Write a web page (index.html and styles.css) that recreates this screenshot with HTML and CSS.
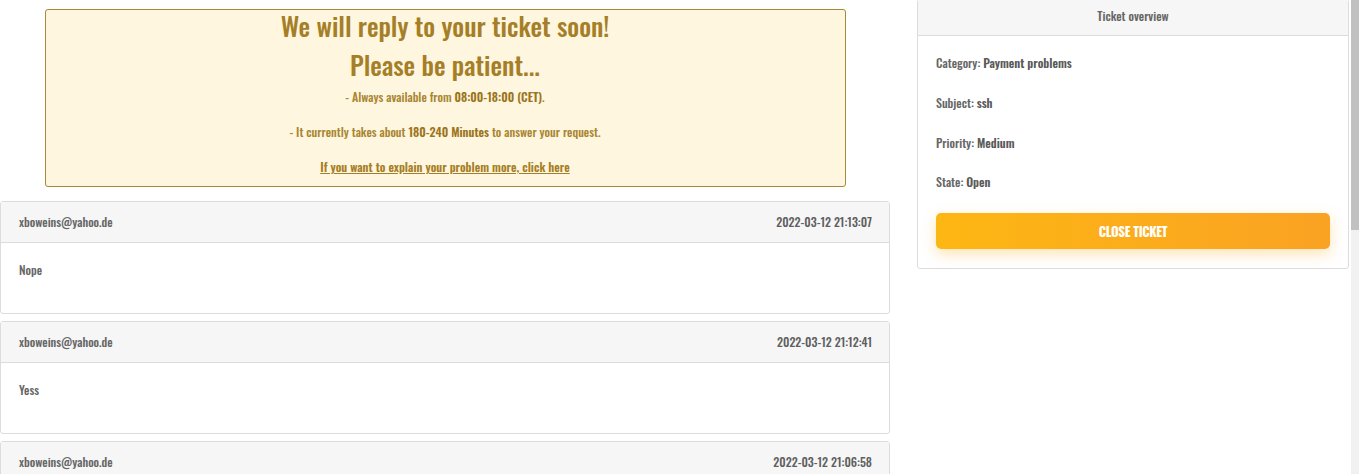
FILE: index.html
```html
<!DOCTYPE html>
<html lang="en">
<head>
<meta charset="utf-8">
<title>Ticket</title>
<link rel="stylesheet" href="styles.css">
</head>
<body>
<div class="page">
  <main class="main">
    <section class="notice">
      <h2 class="notice-title">We will reply to your ticket soon!</h2>
      <h2 class="notice-title second">Please be patient...</h2>
      <p class="notice-line">- Always available from <b>08:00-18:00 (CET)</b>.</p>
      <p class="notice-line">- It currently takes about <b>180-240 Minutes</b> to answer your request.</p>
      <p class="notice-line"><a class="notice-link" href="#">If you want to explain your problem more, click here</a></p>
    </section>

    <article class="msg">
      <header class="msg-head"><span>xboweins@yahoo.de</span><span class="msg-date">2022-03-12 21:13:07</span></header>
      <div class="msg-body"><p>Nope</p></div>
    </article>
    <article class="msg">
      <header class="msg-head"><span>xboweins@yahoo.de</span><span class="msg-date">2022-03-12 21:12:41</span></header>
      <div class="msg-body"><p>Yess</p></div>
    </article>
    <article class="msg">
      <header class="msg-head"><span>xboweins@yahoo.de</span><span class="msg-date">2022-03-12 21:06:58</span></header>
      <div class="msg-body"><p>&nbsp;</p></div>
    </article>
  </main>

  <aside class="side">
    <div class="overview">
      <div class="overview-head">Ticket overview</div>
      <div class="overview-body">
        <p class="ov-item">Category: <b>Payment problems</b></p>
        <p class="ov-item">Subject: <b>ssh</b></p>
        <p class="ov-item">Priority: <b>Medium</b></p>
        <p class="ov-item">State: <b>Open</b></p>
        <button class="close-btn" type="button">Close ticket</button>
      </div>
    </div>
  </aside>
</div>
<div class="scrollbar"><div class="scrollbar-thumb"></div></div>
</body>
</html>
```

FILE: styles.css
```css
html {
  background: #fff;
}
body {
  margin: 0;
  font-family: "Oswald", "Liberation Sans Narrow", "DejaVu Sans Condensed", "Liberation Sans", sans-serif;
  font-size: 12px;
  font-weight: 500;
  color: #666;
}
.page {
  display: grid;
  grid-template-columns: 890px 432px;
  column-gap: 27px;
  align-items: start;
}
.main {
  padding-top: 9px;
  display: flex;
  flex-direction: column;
  gap: 7px;
}
.notice {
  width: 801px;
  margin: 0 auto 7px;
  box-sizing: border-box;
  border: 1px solid #a88a36;
  border-radius: 3px;
  background: #fff6df;
  color: #a57f27;
  text-align: center;
  padding: 0 0 11px;
}
.notice-title {
  margin: -1px 0 0;
  font-size: 26px;
  line-height: 33px;
  font-weight: 500;
}
.notice-title.second {
  margin-top: 6px;
}
.notice-line {
  margin: 7px 0 0;
  font-size: 12px;
  line-height: 17px;
  font-weight: 500;
  color: #a88633;
}
.notice-line + .notice-line {
  margin-top: 18px;
}
.notice-line b {
  font-weight: 600;
  color: #9a7520;
}
.notice-link {
  color: #a57f27;
  font-weight: 600;
  text-decoration: underline;
}
.msg {
  border: 1px solid #dcdcdc;
  border-radius: 3px;
  background: #fff;
}
.msg-head {
  display: flex;
  justify-content: space-between;
  background: #f6f6f6;
  border-bottom: 1px solid #dcdcdc;
  padding: 12px 17px 12px 18px;
  line-height: 16px;
  font-weight: 500;
  color: #666;
}
.msg-date {
  font-weight: 500;
  color: #5f5f5f;
}
.msg-body {
  padding: 19px 18px 19px;
}
.msg-body p {
  margin: 0 0 16px;
  line-height: 16px;
  font-weight: 500;
  color: #666;
}
.overview {
  margin-top: -1px;
  border: 1px solid #dcdcdc;
  border-radius: 3px;
  background: #fff;
}
.overview-head {
  background: #f6f6f6;
  border-bottom: 1px solid #dcdcdc;
  text-align: center;
  line-height: 16px;
  padding: 8px 0 11px;
  font-weight: 500;
  color: #666;
}
.overview-body {
  padding: 19px 18px 19px 18px;
  display: flex;
  flex-direction: column;
}
.ov-item {
  margin: 0 0 24px;
  line-height: 16px;
  font-weight: 500;
  color: #666;
}
.ov-item b {
  font-weight: 600;
  color: #5a5a5a;
}
.ov-item:nth-of-type(4) {
  margin-top: -1px;
  margin-bottom: 23px;
}
.close-btn {
  height: 36px;
  border: 0;
  border-radius: 5px;
  background: linear-gradient(90deg, #fdb713 0%, #faa223 100%);
  box-shadow: 0 5px 14px rgba(252, 176, 40, 0.35);
  color: #fff;
  font-family: inherit;
  font-size: 13px;
  font-weight: 700;
  text-transform: uppercase;
  letter-spacing: -0.3px;
  cursor: pointer;
}
.scrollbar {
  position: fixed;
  top: 0;
  right: 0;
  width: 8px;
  height: 100%;
  background: #f1f1f1;
}
.scrollbar-thumb {
  height: 230px;
  background: #c1c1c1;
}
```
